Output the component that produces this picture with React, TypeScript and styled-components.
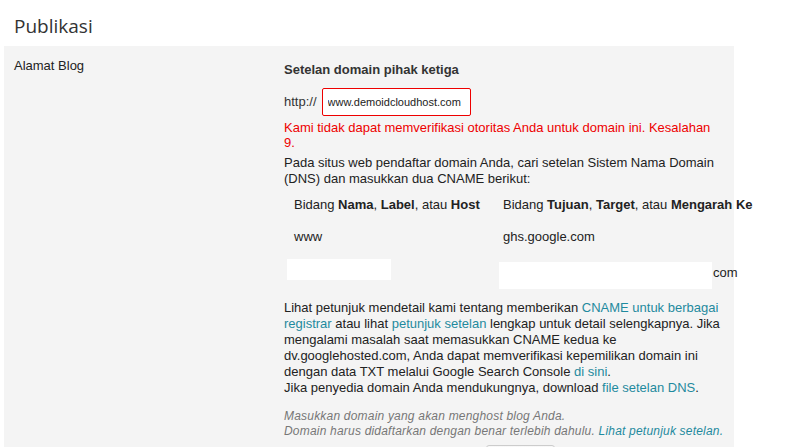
import React from "react";
import styled, { createGlobalStyle } from "styled-components";

const GlobalStyle = createGlobalStyle`
  html, body {
    margin: 0;
    padding: 0;
    background: #ffffff;
  }
  body {
    font-family: "Liberation Sans", Arial, sans-serif;
    font-size: 13px;
    color: #222222;
  }
`;

const App = () => {
  return (
    <>
      <GlobalStyle />
      <Page>
        <PageTitle>Publikasi</PageTitle>
        <SettingsPanel>
          <FieldLabel>Alamat Blog</FieldLabel>
          <FieldContent>
            <SectionTitle>Setelan domain pihak ketiga</SectionTitle>
            <UrlRow>
              <span>http://</span>
              <DomainInput defaultValue="www.demoidcloudhost.com" />
            </UrlRow>
            <ErrorText>
              Kami tidak dapat memverifikasi otoritas Anda untuk domain ini. Kesalahan 9.
            </ErrorText>
            <Paragraph>
              Pada situs web pendaftar domain Anda, cari setelan Sistem Nama Domain (DNS) dan
              masukkan dua CNAME berikut:
            </Paragraph>
            <CnameTable>
              <Cell>
                Bidang <b>Nama</b>, <b>Label</b>, atau <b>Host</b>
              </Cell>
              <Cell>
                Bidang <b>Tujuan</b>, <b>Target</b>, atau <b>Mengarah Ke</b>
              </Cell>
              <Cell>www</Cell>
              <Cell>ghs.google.com</Cell>
              <RedactedCell $align="flex-start">
                <Redacted $width={104} $height={21} $offset={3} />
              </RedactedCell>
              <RedactedCell $align="flex-end">
                <Redacted $width={213} $height={27} $offset={6} />
                <ComSuffix>com</ComSuffix>
              </RedactedCell>
            </CnameTable>
            <Paragraph $gap={7}>
              Lihat petunjuk mendetail kami tentang memberikan{" "}
              <Link href="#">CNAME untuk berbagai</Link> <Link href="#">registrar</Link> atau
              lihat <Link href="#">petunjuk setelan</Link> lengkap untuk detail selengkapnya.
              Jika mengalami masalah saat memasukkan CNAME kedua ke dv.googlehosted.com, Anda
              dapat memverifikasi kepemilikan domain ini dengan data TXT melalui Google Search
              Console <Link href="#">di sini</Link>.
              <br />
              Jika penyedia domain Anda mendukungnya, download{" "}
              <Link href="#">file setelan DNS</Link>.
            </Paragraph>
            <HelpText>
              Masukkan domain yang akan menghost blog Anda.
              <br />
              Domain harus didaftarkan dengan benar terlebih dahulu.{" "}
              <Link href="#">Lihat petunjuk setelan.</Link>
            </HelpText>
            <SaveButton type="button">Simpan</SaveButton>
          </FieldContent>
        </SettingsPanel>
      </Page>
    </>
  );
};

export default App;

const Page = styled.div`
  width: 786px;
  height: 447px;
  overflow: hidden;
`;

const PageTitle = styled.h1`
  margin: 0;
  padding: 13px 0 0 14px;
  height: 33px;

  font-family: "Open Sans", "Noto Sans", sans-serif;
  font-weight: 400;
  font-size: 19px;
  line-height: 26px;
  color: #333333;
`;

const SettingsPanel = styled.section`
  display: grid;
  grid-template-columns: 270px 438px;

  width: 730px;
  min-height: 420px;
  margin-left: 4px;
  padding: 12px 0 0 10px;
  box-sizing: border-box;

  background-color: #f4f4f4;
`;

const FieldLabel = styled.div`
  line-height: 16px;
  color: #222222;
`;

const FieldContent = styled.div`
  display: flex;
  flex-direction: column;
  align-items: flex-start;

  padding-top: 4px;
  line-height: 16px;
`;

const SectionTitle = styled.h3`
  margin: 0;
  font-size: 13px;
  font-weight: 700;
  line-height: 16px;
  color: #333333;
`;

const UrlRow = styled.div`
  display: flex;
  align-items: center;
  gap: 5px;

  margin-top: 10px;
  color: #333333;
`;

const DomainInput = styled.input`
  width: 149px;
  height: 28px;
  box-sizing: border-box;
  padding: 0 5px;

  border: 1px solid #ee0000;
  border-radius: 2px;
  background: #ffffff;
  outline: none;

  font-family: "Liberation Sans", Arial, sans-serif;
  font-size: 11px;
  color: #222222;
`;

const ErrorText = styled.p`
  margin: 4px 0 0;
  line-height: 15px;
  color: #ee0000;
`;

const Paragraph = styled.p<{ $gap?: number }>`
  margin: ${({ $gap }) => $gap ?? 5}px 0 0;
  line-height: 16px;
  color: #222222;
`;

const CnameTable = styled.div`
  display: grid;
  grid-template-columns: 209px 229px;
  margin-top: 2px;
  white-space: nowrap;
`;

const Cell = styled.div`
  padding: 8px 10px;
  line-height: 16px;
  color: #222222;

  & > b {
    font-weight: 700;
  }
`;

const RedactedCell = styled.div<{ $align: string }>`
  display: flex;
  align-items: ${({ $align }) => $align};
  height: 40px;
  padding-top: 6px;
  box-sizing: border-box;
`;

const Redacted = styled.div<{ $width: number; $height: number; $offset: number }>`
  flex: none;
  width: ${({ $width }) => $width}px;
  height: ${({ $height }) => $height}px;
  margin-left: ${({ $offset }) => $offset}px;
  margin-bottom: 4px;
  background: #ffffff;
`;

const ComSuffix = styled.span`
  margin-left: 1px;
  margin-bottom: 12px;
  line-height: 16px;
`;

const Link = styled.a`
  color: #1f8a9e;
  text-decoration: none;
`;

const HelpText = styled.p`
  margin: 13px 0 0;
  font-size: 12px;
  font-style: italic;
  letter-spacing: 0.2px;
  line-height: 15px;
  color: #777777;
  white-space: nowrap;
`;

const SaveButton = styled.button`
  margin: 6px 0 0 202px;
  width: 69px;
  height: 28px;

  border: 1px solid #cccccc;
  border-radius: 3px;
  background: linear-gradient(#f8f8f8, #ececec);

  font-family: "Liberation Sans", Arial, sans-serif;
  font-size: 13px;
  color: #444444;
`;
